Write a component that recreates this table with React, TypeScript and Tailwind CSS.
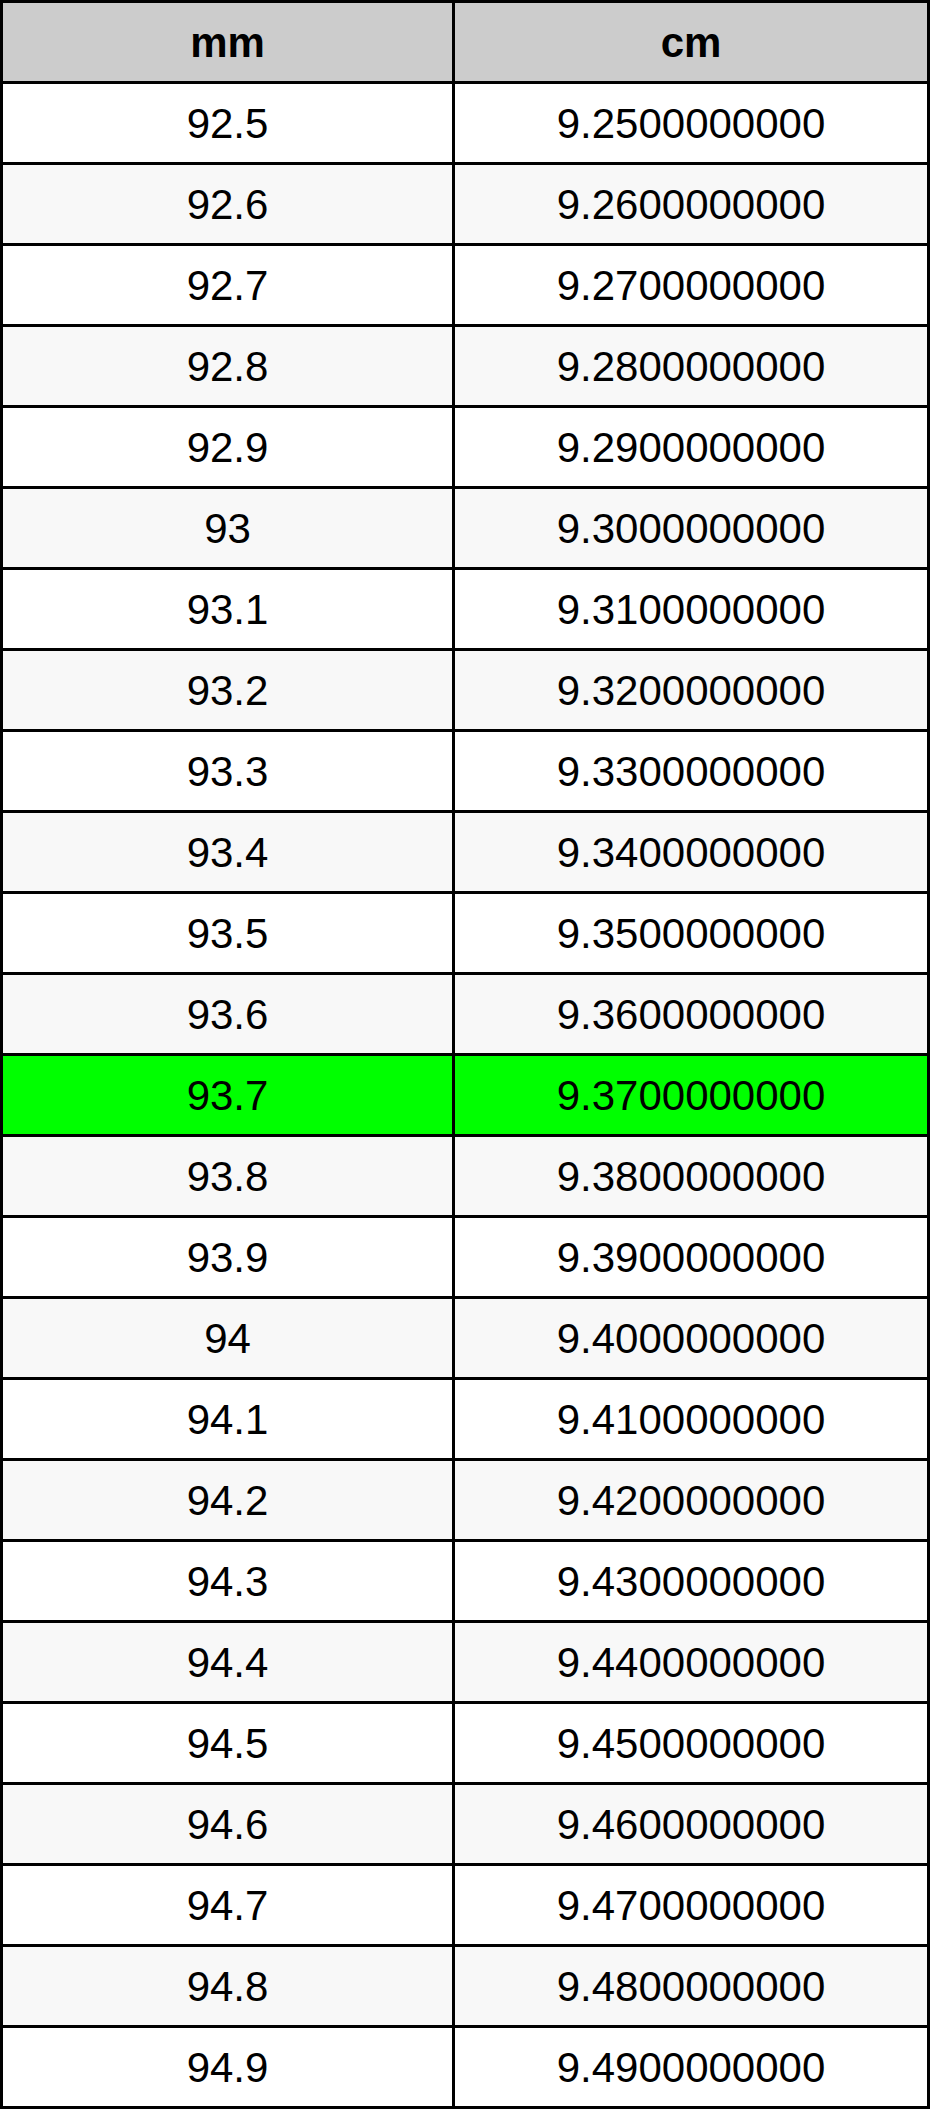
const rows = [
  "92.5", "92.6", "92.7", "92.8", "92.9", "93", "93.1", "93.2", "93.3", "93.4",
  "93.5", "93.6", "93.7", "93.8", "93.9", "94", "94.1", "94.2", "94.3", "94.4",
  "94.5", "94.6", "94.7", "94.8", "94.9",
];

function toCm(mm: string) {
  return (parseFloat(mm) / 10).toFixed(10);
}

export default function App() {
  return (
    <div className="w-[930px] bg-white font-['Liberation_Sans',Arial,sans-serif] text-[42px] text-black">
      <div className="border-[3px] border-black">
        <div className="grid h-[81px] grid-cols-[452px_1fr] border-b-[3px] border-black bg-[#cccccc] font-bold">
          <div className="flex items-center justify-center border-r-[3px] border-black">mm</div>
          <div className="flex items-center justify-center">cm</div>
        </div>
        {rows.map((mm, i) => {
          const last = i === rows.length - 1;
          const bg = mm === "93.7" ? "bg-[#00ff00]" : i % 2 === 1 ? "bg-[#f8f8f8]" : "bg-white";
          return (
            <div
              key={mm}
              className={`grid grid-cols-[452px_1fr] ${bg} ${last ? "h-[78px]" : "h-[81px] border-b-[3px] border-black"}`}
            >
              <div className="flex items-center justify-center border-r-[3px] border-black">{mm}</div>
              <div className="flex items-center justify-center">{toCm(mm)}</div>
            </div>
          );
        })}
      </div>
    </div>
  );
}
